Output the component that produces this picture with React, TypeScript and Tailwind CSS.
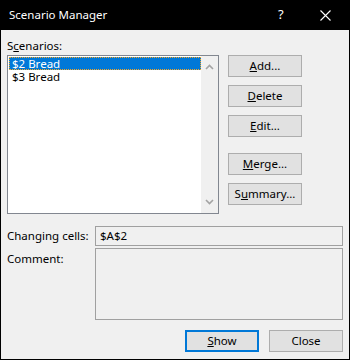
import React from "react";

const font = { fontFamily: '"Segoe UI", "Noto Sans", "Liberation Sans", sans-serif' };

function Btn({ children, primary }: { children: React.ReactNode; primary?: boolean }) {
  return (
    <div
      className={
        "w-[74px] h-[22px] flex items-center justify-center bg-[#e1e1e1] text-black text-[11.5px] " +
        (primary ? "border-2 border-[#0078d7]" : "border border-[#adadad]")
      }
    >
      {children}
    </div>
  );
}

function Chevron({ up }: { up?: boolean }) {
  return (
    <svg width="9" height="6" viewBox="0 0 9 6">
      <path
        d={up ? "M1 5 L4.5 1.5 L8 5" : "M1 1 L4.5 4.5 L8 1"}
        fill="none"
        stroke="#a3a3a3"
        strokeWidth="1.6"
      />
    </svg>
  );
}

export default function App() {
  return (
    <div className="w-[350px] h-[360px] flex flex-col border-x border-b border-black bg-[#f0f0f0] text-black" style={font}>
      {/* title bar */}
      <div className="h-[30px] bg-black text-white flex items-center shrink-0">
        <span className="ml-[8px] text-[11.5px] flex-1">Scenario Manager</span>
        <span className="text-[13px] w-[14px] mr-[28px]">?</span>
        <svg width="11" height="11" viewBox="0 0 11 11" className="mr-[18px]">
          <path d="M0.5 0.5 L10.5 10.5 M10.5 0.5 L0.5 10.5" stroke="white" strokeWidth="1.1" />
        </svg>
      </div>

      <div className="flex-1 flex flex-col px-[6px] pt-[8px] text-[11.5px]">
        <div className="h-[17px] leading-[15px]">
          S<u>c</u>enarios:
        </div>

        <div className="flex gap-[9px]">
          {/* list */}
          <div className="w-[212px] h-[159px] border border-[#828790] bg-white flex">
            <div className="flex-1 pt-[1px] pl-[1px] leading-[13px]">
              <div className="h-[13px] bg-[#0078d7] text-white border border-dotted border-[#f5a623] pl-[2px] leading-[11px]">$2 Bread</div>
              <div className="h-[13px] pl-[3px]">$3 Bread</div>
            </div>
            <div className="w-[17px] bg-[#f0f0f0] flex flex-col items-center justify-between py-[8px]">
              <Chevron up />
              <Chevron />
            </div>
          </div>

          {/* side buttons */}
          <div className="flex flex-col">
            <Btn>
              <u>A</u>dd...
            </Btn>
            <div className="mt-[8px]">
              <Btn>
                <u>D</u>elete
              </Btn>
            </div>
            <div className="mt-[8px]">
              <Btn>
                <u>E</u>dit...
              </Btn>
            </div>
            <div className="mt-[16px]">
              <Btn>
                <u>M</u>erge...
              </Btn>
            </div>
            <div className="mt-[8px]">
              <Btn>
                S<u>u</u>mmary...
              </Btn>
            </div>
          </div>
        </div>

        {/* changing cells */}
        <div className="flex mt-[12px]">
          <div className="w-[88px] leading-[20px]">Changing cells:</div>
          <div className="flex-1 h-[20px] border border-[#a0a0a0] leading-[18px] pl-[4px]">$A$2</div>
        </div>
        <div className="flex mt-[2px]">
          <div className="w-[88px] leading-[18px] pt-[2px]">Comment:</div>
          <div className="flex-1 h-[72px] border border-[#a0a0a0]"></div>
        </div>

        <div className="flex justify-end gap-[10px] mt-[10px]">
          <Btn primary>
            <u>S</u>how
          </Btn>
          <Btn>Close</Btn>
        </div>
      </div>
    </div>
  );
}
